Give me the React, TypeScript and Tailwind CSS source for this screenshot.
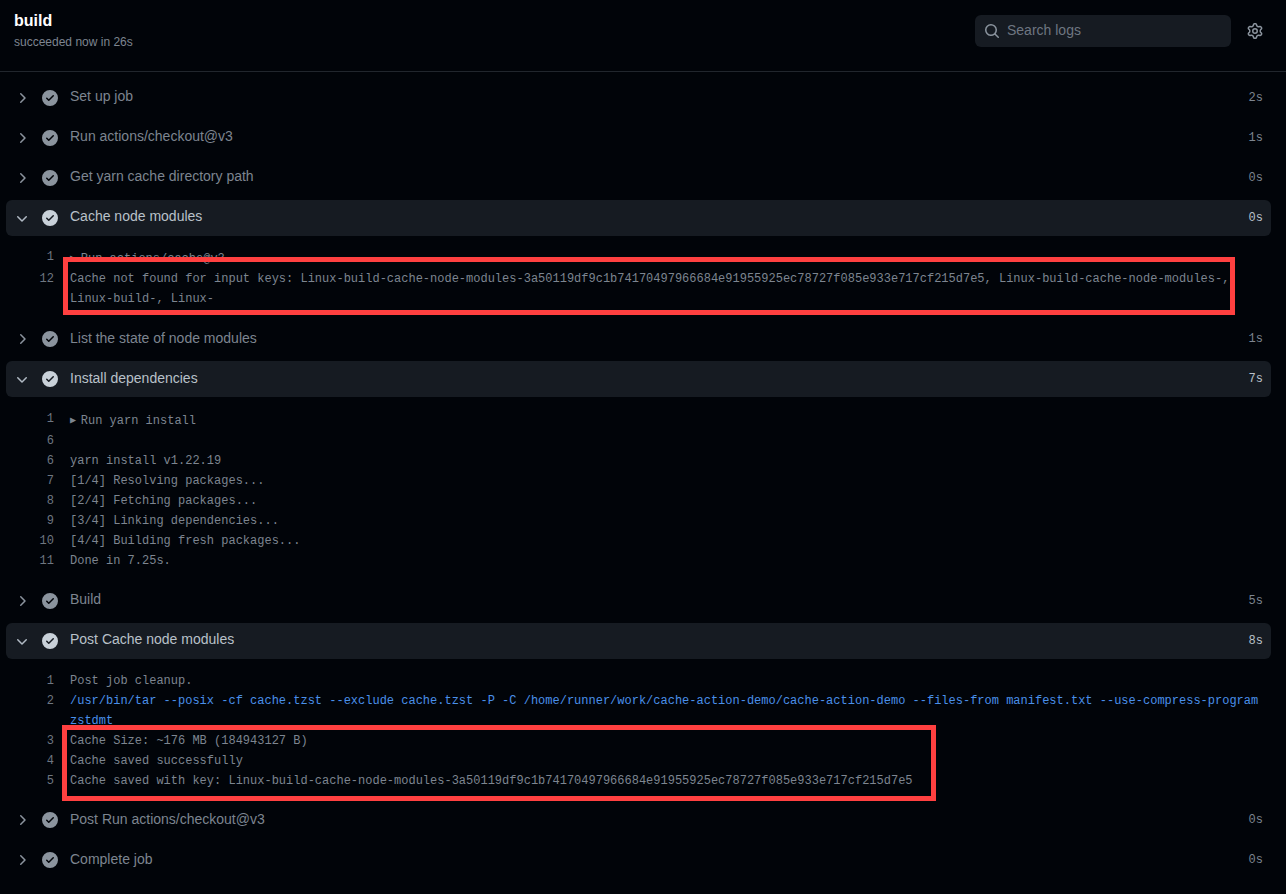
interface LogLine {
  n: number;
  text?: string;
  group?: boolean;
  blue?: boolean;
}

interface Step {
  title: string;
  time: string;
  low?: boolean;
  pad?: string;
  lines?: LogLine[];
  box?: string;
}

const KEY = 'Linux-build-cache-node-modules-3a50119df9c1b74170497966684e91955925ec78727f085e933e717cf215d7e5';

const steps: Step[] = [
  { title: 'Set up job', time: '2s' },
  { title: 'Run actions/checkout@v3', time: '1s' },
  { title: 'Get yarn cache directory path', time: '0s' },
  {
    title: 'Cache node modules',
    time: '0s',
    pad: 'pt-[13px] pb-2',
    lines: [
      { n: 1, text: 'Run actions/cache@v3', group: true },
      { n: 12, text: `Cache not found for input keys: ${KEY}, Linux-build-cache-node-modules-, Linux-build-, Linux-` },
    ],
    box: 'left-[57px] top-[21px] w-[1172px] h-[58px]',
  },
  { title: 'List the state of node modules', time: '1s', low: true },
  {
    title: 'Install dependencies',
    time: '7s',
    low: true,
    pad: 'pt-3.5 pb-2',
    lines: [
      { n: 1, text: 'Run yarn install', group: true },
      { n: 6 },
      { n: 6, text: 'yarn install v1.22.19' },
      { n: 7, text: '[1/4] Resolving packages...' },
      { n: 8, text: '[2/4] Fetching packages...' },
      { n: 9, text: '[3/4] Linking dependencies...' },
      { n: 10, text: '[4/4] Building fresh packages...' },
      { n: 11, text: 'Done in 7.25s.' },
    ],
  },
  { title: 'Build', time: '5s' },
  {
    title: 'Post Cache node modules',
    time: '8s',
    pad: 'pt-3 pb-[7px]',
    lines: [
      { n: 1, text: 'Post job cleanup.' },
      {
        n: 2,
        blue: true,
        text: '/usr/bin/tar --posix -cf cache.tzst --exclude cache.tzst -P -C /home/runner/work/cache-action-demo/cache-action-demo --files-from manifest.txt --use-compress-program zstdmt',
      },
      { n: 3, text: 'Cache Size: ~176 MB (184943127 B)' },
      { n: 4, text: 'Cache saved successfully' },
      { n: 5, text: `Cache saved with key: ${KEY}` },
    ],
    box: 'left-[56px] top-[66px] w-[874px] h-[76px]',
  },
  { title: 'Post Run actions/checkout@v3', time: '0s', low: true },
  { title: 'Complete job', time: '0s', low: true },
];

function Octicon({ d, className }: { d: string; className?: string }) {
  return (
    <svg viewBox="0 0 16 16" width="16" height="16" fill="currentColor" className={`shrink-0 ${className ?? ''}`}>
      <path d={d} />
    </svg>
  );
}

const CHECK =
  'M8 16A8 8 0 1 1 8 0a8 8 0 0 1 0 16Zm3.78-9.72a.751.751 0 0 0-.018-1.042.751.751 0 0 0-1.042-.018L6.75 9.19 5.28 7.72a.751.751 0 0 0-1.042.018.751.751 0 0 0-.018 1.042l2 2a.75.75 0 0 0 1.06 0Z';
const RIGHT =
  'M6.22 3.22a.75.75 0 0 1 1.06 0l4.25 4.25a.75.75 0 0 1 0 1.06l-4.25 4.25a.751.751 0 0 1-1.042-.018.751.751 0 0 1-.018-1.042L9.94 8 6.22 4.28a.75.75 0 0 1 0-1.06Z';
const DOWN =
  'M12.78 5.22a.749.749 0 0 1 0 1.06l-4.25 4.25a.749.749 0 0 1-1.06 0L3.22 6.28a.749.749 0 1 1 1.06-1.06L8 8.939l3.72-3.719a.749.749 0 0 1 1.06 0Z';
const SEARCH =
  'M10.68 11.74a6 6 0 0 1-7.922-8.982 6 6 0 0 1 8.982 7.922l3.04 3.04a.749.749 0 0 1-.326 1.275.749.749 0 0 1-.734-.215ZM11.5 7a4.499 4.499 0 1 0-8.997 0A4.499 4.499 0 0 0 11.5 7Z';
const GEAR =
  'M8 0a8.2 8.2 0 0 1 .701.031C9.444.095 9.99.645 10.16 1.29l.288 1.107c.018.066.079.158.212.224.231.114.454.243.668.386.123.082.233.09.299.071l1.103-.303c.644-.176 1.392.021 1.82.63.27.385.506.792.704 1.218.315.675.111 1.422-.364 1.891l-.814.806c-.049.048-.098.147-.088.294.016.257.016.515 0 .772-.01.147.038.246.088.294l.814.806c.475.469.679 1.216.364 1.891a7.977 7.977 0 0 1-.704 1.217c-.428.61-1.176.807-1.82.63l-1.102-.302c-.067-.019-.177-.011-.3.071a5.909 5.909 0 0 1-.668.386c-.133.066-.194.158-.211.224l-.29 1.106c-.168.646-.715 1.196-1.458 1.26a8.006 8.006 0 0 1-1.402 0c-.743-.064-1.289-.614-1.458-1.26l-.289-1.106c-.018-.066-.079-.158-.212-.224a5.738 5.738 0 0 1-.668-.386c-.123-.082-.233-.09-.299-.071l-1.103.303c-.644.176-1.392-.021-1.82-.63a8.12 8.12 0 0 1-.704-1.218c-.315-.675-.111-1.422.363-1.891l.815-.806c.05-.048.098-.147.088-.294a6.214 6.214 0 0 1 0-.772c.01-.147-.038-.246-.088-.294l-.815-.806C.635 6.045.431 5.298.746 4.623a7.92 7.92 0 0 1 .704-1.217c.428-.61 1.176-.807 1.82-.63l1.102.302c.067.019.177.011.3-.071.214-.143.437-.272.668-.386.133-.066.194-.158.211-.224l.29-1.106C6.009.645 6.556.095 7.299.03 7.53.01 7.764 0 8 0Zm-.571 1.525c-.036.003-.108.036-.137.146l-.289 1.105c-.147.561-.549.967-.998 1.189-.173.086-.34.183-.5.29-.417.278-.97.423-1.529.27l-1.103-.303c-.109-.03-.175.016-.195.045-.22.312-.412.644-.573.99-.014.031-.021.11.059.19l.815.806c.411.406.562.957.53 1.456a4.709 4.709 0 0 0 0 .582c.032.499-.119 1.05-.53 1.456l-.815.806c-.081.08-.073.159-.059.19.162.346.353.677.573.989.02.03.085.076.195.046l1.102-.303c.56-.153 1.113-.008 1.53.27.161.107.328.204.501.29.447.222.85.629.997 1.189l.289 1.105c.029.109.101.143.137.146a6.6 6.6 0 0 0 1.142 0c.036-.003.108-.036.137-.146l.289-1.105c.147-.561.549-.967.998-1.189.173-.086.34-.183.5-.29.417-.278.97-.423 1.529-.27l1.103.303c.109.029.175-.016.195-.045.22-.313.411-.644.573-.99.014-.031.021-.11-.059-.19l-.815-.806c-.411-.406-.562-.957-.53-1.456a4.709 4.709 0 0 0 0-.582c-.032-.499.119-1.05.53-1.456l.815-.806c.081-.08.073-.159.059-.19a6.464 6.464 0 0 0-.573-.989c-.02-.03-.085-.076-.195-.046l-1.102.303c-.56.153-1.113.008-1.53-.27a4.44 4.44 0 0 0-.501-.29c-.447-.222-.85-.629-.997-1.189l-.289-1.105c-.029-.11-.101-.143-.137-.146a6.6 6.6 0 0 0-1.142 0ZM11 8a3 3 0 1 1-6 0 3 3 0 0 1 6 0ZM9.5 8a1.5 1.5 0 1 0-3.001.001A1.5 1.5 0 0 0 9.5 8Z';

function StepRow({ step }: { step: Step }) {
  const open = !!step.lines;
  return (
    <div>
      <div className={`flex h-9 items-center rounded-md px-2 ${open ? 'bg-[#161b22]' : ''}`}>
        <Octicon d={open ? DOWN : RIGHT} className={open ? 'translate-y-px text-[#b1bac4]' : 'text-[#8b949e]'} />
        <Octicon d={CHECK} className={`ml-3 ${open ? 'text-[#c9d1d9]' : 'text-[#8b949e]'}`} />
        <span
          className={`ml-3 flex-1 text-sm ${step.low ? '-translate-y-px' : '-translate-y-0.5'} ${
            open ? 'text-[#b9c1c9]' : 'text-[#7d8590]'
          }`}
        >
          {step.title}
        </span>
        <span className={`font-['Liberation_Mono',monospace] text-xs ${open ? 'text-[#b9c1c9]' : 'text-[#7d8590]'}`}>
          {step.time}
        </span>
      </div>
      {open && (
        <div className={`relative ${step.pad}`}>
          {step.lines!.map((line, i) => (
            <div key={i} className="flex font-['Liberation_Mono',monospace] text-xs leading-5">
              <span className={`w-12 shrink-0 text-right text-[#6e7681] ${line.group ? '-translate-y-0.5' : ''}`}>
                {line.n}
              </span>
              <span
                className={`ml-4 min-w-0 flex-1 pr-2 whitespace-pre-wrap ${
                  line.blue ? 'text-[#4a90ea]' : 'text-[#7d8590]'
                }`}
              >
                {line.group && <span className="inline-block w-[10.8px] align-[1px] text-[10px]">▶</span>}
                {line.text ?? ' '}
              </span>
            </div>
          ))}
          {step.box && <div className={`absolute border-[5px] border-[#ff4040] ${step.box}`} />}
        </div>
      )}
    </div>
  );
}

export default function App() {
  return (
    <div className="min-h-screen bg-[#010409] font-['Liberation_Sans',sans-serif]">
      <header className="flex h-[72px] items-start justify-between border-b border-[#21262d] pl-3.5 pr-[23px]">
        <div>
          <h1 className="mt-[11px] text-base leading-5 font-bold text-white">build</h1>
          <p className="mt-px text-xs leading-5 text-[#7d8590]">succeeded now in 26s</p>
        </div>
        <div className="mt-[15px] flex items-center">
          <div className="flex h-8 w-64 items-center rounded-md bg-[#161b22] pl-[9px]">
            <Octicon d={SEARCH} className="text-[#8b949e]" />
            <span className="ml-[7px] -translate-y-px text-sm text-[#6e7681]">Search logs</span>
          </div>
          <Octicon d={GEAR} className="ml-4 text-[#8b949e]" />
        </div>
      </header>
      <main className="ml-1.5 mr-[15px] flex flex-col gap-1 pt-2">
        {steps.map((step) => (
          <StepRow key={step.title} step={step} />
        ))}
      </main>
    </div>
  );
}
